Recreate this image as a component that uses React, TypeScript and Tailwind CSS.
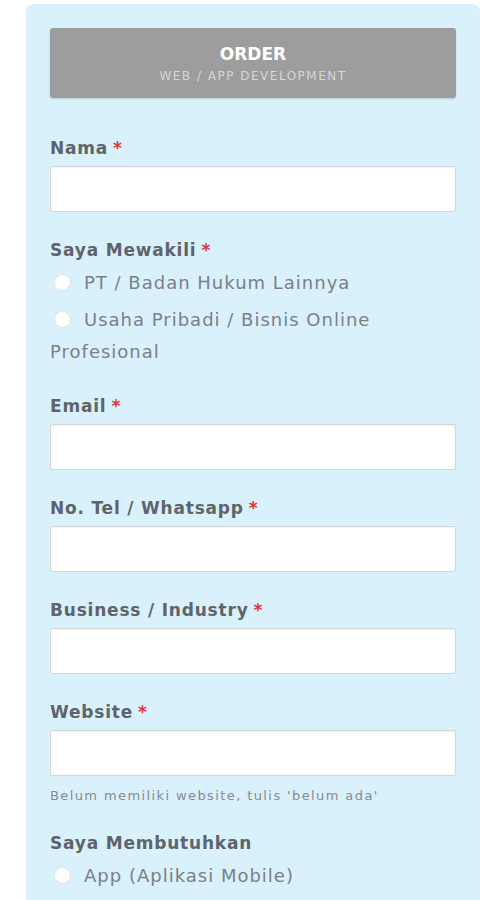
const font = { fontFamily: '"DejaVu Sans", "Open Sans", sans-serif' };

const Label = ({ label, required = true }: { label: string; required?: boolean }) => (
  <div className="text-[17px] leading-[24px] font-bold tracking-[0.8px] text-[#5f636a]">
    {label}
    {required && <span className="ml-[5px] text-[#e2343a]">*</span>}
  </div>
);

const Field = ({ label, first = false }: { label: string; first?: boolean }) => (
  <div className={first ? "mt-[38px]" : "mt-[26px]"}>
    <Label label={label} />
    <input
      type="text"
      className="mt-[6px] block h-[46px] w-full rounded-[2px] border border-[#d4d6d8] bg-white shadow-[inset_0_1px_2px_rgba(0,0,0,0.06)] outline-none"
    />
  </div>
);

const Radio = ({ text }: { text: string }) => (
  <div className="mt-[5px] text-[18px] leading-[32px] tracking-[1px] text-[#7b8087]">
    <span className="ml-[4px] mr-[13px] inline-block h-[17px] w-[17px] translate-y-[2px] rounded-full border border-[#e1e3e6] bg-white" />
    {text}
  </div>
);

export default function App() {
  return (
    <div className="h-[900px] overflow-hidden bg-white" style={font}>
      <div className="ml-[26px] mt-[4px] min-h-[896px] w-[454px] rounded-t-[8px] bg-[#d8f1fa] px-[24px] pt-[24px]">
        <div className="flex h-[70px] flex-col items-center justify-center rounded-[3px] bg-[#9d9d9d] shadow-[0_1px_2px_rgba(0,0,0,0.15)]">
          <div className="text-[17px] leading-[20px] font-bold text-white">ORDER</div>
          <div className="mt-[5px] text-[12px] leading-[14px] tracking-[1.5px] text-[#d6d6d6]">
            WEB / APP DEVELOPMENT
          </div>
        </div>

        <Field label="Nama" first />

        <div className="mt-[26px]">
          <Label label="Saya Mewakili" />
          <Radio text="PT / Badan Hukum Lainnya" />
          <Radio text="Usaha Pribadi / Bisnis Online Profesional" />
        </div>

        <Field label="Email" />
        <Field label="No. Tel / Whatsapp" />
        <Field label="Business / Industry" />
        <Field label="Website" />
        <div className="mt-[11px] text-[13px] leading-[18px] tracking-[1.4px] text-[#878b91]">
          Belum memiliki website, tulis 'belum ada'
        </div>

        <div className="mt-[26px]">
          <Label label="Saya Membutuhkan" required={false} />
          <Radio text="App (Aplikasi Mobile)" />
        </div>
      </div>
    </div>
  );
}
